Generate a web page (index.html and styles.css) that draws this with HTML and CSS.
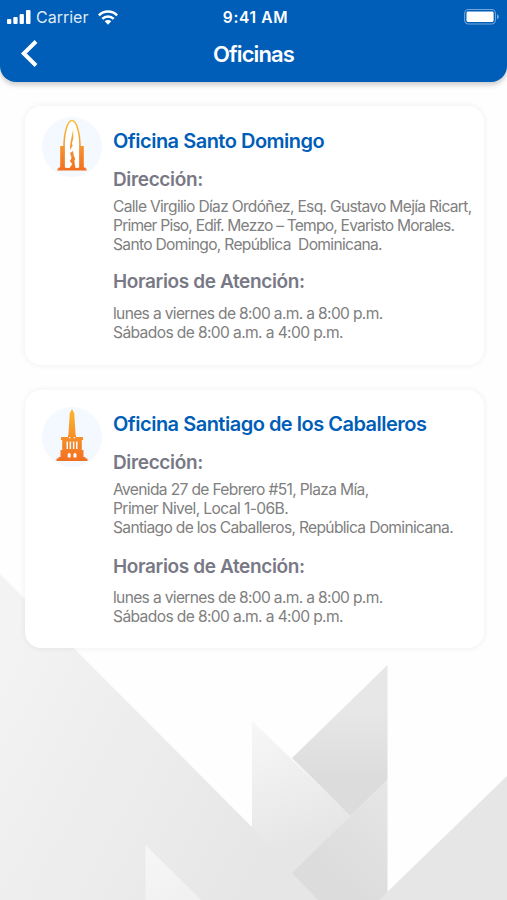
FILE: index.html
```html
<!DOCTYPE html>
<html lang="es">
<head>
<meta charset="utf-8">
<title>Oficinas</title>
<link rel="stylesheet" href="styles.css">
</head>
<body>
<svg class="backdrop" viewBox="0 0 507 340" aria-hidden="true">
  <defs>
    <linearGradient id="big" gradientUnits="userSpaceOnUse" x1="0" y1="100" x2="300" y2="260"><stop offset="0" stop-color="#f3f3f3"/><stop offset="1" stop-color="#e6e6e6"/></linearGradient>
    <linearGradient id="mid" gradientUnits="userSpaceOnUse" x1="256" y1="170" x2="300" y2="285"><stop offset="0" stop-color="#f6f6f6"/><stop offset="1" stop-color="#e6e6e6"/></linearGradient>
    <linearGradient id="dark" x1="0" y1="0" x2="0" y2="1"><stop offset="0.3" stop-color="#e7e7e7"/><stop offset="0.75" stop-color="#dcdcdc"/></linearGradient>
    <linearGradient id="low" x1="1" y1="0" x2="0.3" y2="1"><stop offset="0" stop-color="#e6e6e6"/><stop offset="0.8" stop-color="#dcdcdc"/></linearGradient>
    <linearGradient id="small" x1="0" y1="0.2" x2="0.5" y2="1"><stop offset="0" stop-color="#f6f6f6"/><stop offset="1" stop-color="#f1f1f1"/></linearGradient>
  </defs>
  <path fill="url(#big)" d="M0 14 252 267 350 256 387 331V340H0z"/>
  <path fill="url(#mid)" d="M252 161 351 256 292 314 252 267z"/>
  <path fill="url(#dark)" d="M387.500 105V220L350.500 256 292 198z"/>
  <path fill="url(#low)" d="M387.500 220V340H318L292 313z"/>
  <path fill="url(#small)" d="M145.500 285 201 340H145.500z"/>
  <path fill="#e6e6e6" d="M507 216V340H379z"/>
</svg>
<header class="topbar">
  <div class="status">
    <div class="status-left">
      <svg class="signal" viewBox="0 0 24 14"><g fill="#fff"><rect x="0" y="9" width="4.300" height="5" rx="1"/><rect x="6.300" y="7" width="4.300" height="7" rx="1"/><rect x="12.600" y="4" width="4.300" height="10" rx="1"/><rect x="19" y="0" width="4.500" height="14" rx="1"/></g></svg>
      <span class="carrier">Carrier</span>
      <svg class="wifi" viewBox="0 0 20 15"><g fill="none" stroke="#fff" stroke-width="2.500"><path d="M.9 5.300a13 13 0 0 1 18.200 0"/><path d="M4.300 8.900a8.100 8.100 0 0 1 11.400 0"/></g><path fill="#fff" d="M6.700 11.300a4.700 4.700 0 0 1 6.600 0L10 14.700z"/></svg>
    </div>
    <span class="clock">9:41 AM</span>
    <svg class="battery" viewBox="0 0 36 16"><rect x=".6" y=".6" width="31.800" height="14.800" rx="4" fill="none" stroke="#fff" stroke-opacity=".45" stroke-width="1.100"/><rect x="2.500" y="2.600" width="28" height="10.800" rx="1.500" fill="#fff"/><path fill="#fff" fill-opacity=".45" d="M34 5.300q2 .8 2 2.700t-2 2.700z"/></svg>
  </div>
  <div class="nav">
    <svg class="back" viewBox="0 0 18 28"><path d="M16 1.500 3.800 13.500 16 25.500" fill="none" stroke="#fff" stroke-width="4"/></svg>
    <h1>Oficinas</h1>
  </div>
</header>
<main>
  <section class="card">
    <div class="badge badge-first">
      <svg viewBox="0 0 60 60"><defs><linearGradient id="o1" gradientUnits="userSpaceOnUse" x1="0" y1="2" x2="0" y2="53"><stop offset="0" stop-color="#fbc23c"/><stop offset="1" stop-color="#f26f21"/></linearGradient></defs>
        <path fill="#fff" d="M22.500 51V30C22.500 16 26 4 30 4s7.500 12 7.500 26v21z"/>
        <path fill="none" stroke="url(#o1)" stroke-width="1.500" d="M22 51V30C22 16 25.500 3.500 30 3.500S38 16 38 30v21"/>
        <path fill="url(#o1)" d="M18.200 29h4.300v21.500h15V29h4.300v21.500h1.500L45 53.500H15l1.700-3h1.500z"/>
        <path fill="#fff" d="M23.500 48h13v2.800h-13z"/>
        <path fill="url(#o1)" d="M31.200 12v10l-1.200 4 .6 3-2.800 4 .8-8z M28 36l3-2 .8 5 1.400 2.500-.8 2.500 1 7h-5.800l2.600-4-2.400-3 1.800-3z"/></svg>
    </div>
    <div class="info">
      <h2 class="t-domingo">Oficina Santo Domingo</h2>
      <h3 class="t-dir">Dirección:</h3>
      <p class="address"><span class="a1">Calle Virgilio Díaz Ordóñez, Esq. Gustavo Mejía Ricart,</span><span class="a2">Primer Piso, Edif. Mezzo – Tempo, Evaristo Morales.</span><span class="a3">Santo Domingo, República&nbsp; Dominicana.</span></p>
      <h3 class="t-hor">Horarios de Atención:</h3>
      <p class="hours"><span class="weekdays">lunes a viernes de 8:00 a.m. a 8:00 p.m.</span><span class="saturday">Sábados de 8:00 a.m. a 4:00 p.m.</span></p>
    </div>
  </section>
  <section class="card card-second">
    <div class="badge badge-second">
      <svg viewBox="0 0 60 60"><defs><linearGradient id="o2" gradientUnits="userSpaceOnUse" x1="0" y1="2" x2="0" y2="54"><stop offset="0" stop-color="#fbb62f"/><stop offset="1" stop-color="#f26f21"/></linearGradient></defs>
        <path fill="url(#o2)" d="M30 2 27.800 6l-1.400 22h-.4v2H19v3h1.200v10H18.500v7h-2v1.500H14.500V54h31v-2.500H43.500V50h-2v-7h-1.700V33H41v-3h-7v-2h-.4L32.200 6z"/>
        <g fill="#f4f8ff"><path d="M24.500 34.500h1.500V42h-1.500zM27.600 34.500h1.500V42h-1.500zM30.900 34.500h1.500V42h-1.500zM34 34.500h1.500V42H34zM25.700 50.500V47q1.500-2 3 0v3.500zM31.500 50.500V47q1.500-2 3 0v3.500zM27 30h1.300v1.200H27zM31.800 30h1.300v1.200h-1.300z"/></g></svg>
    </div>
    <div class="info">
      <h2 class="t-santiago">Oficina Santiago de los Caballeros</h2>
      <h3 class="t-dir">Dirección:</h3>
      <p class="address"><span class="b1">Avenida 27 de Febrero #51, Plaza Mía,</span><span class="b2">Primer Nivel, Local 1-06B.</span><span class="b3">Santiago de los Caballeros, República Dominicana.</span></p>
      <h3 class="t-hor">Horarios de Atención:</h3>
      <p class="hours"><span class="weekdays">lunes a viernes de 8:00 a.m. a 8:00 p.m.</span><span class="saturday">Sábados de 8:00 a.m. a 4:00 p.m.</span></p>
    </div>
  </section>
</main>
</body>
</html>
```
FILE: styles.css
```css
* { box-sizing: border-box; margin: 0; padding: 0; }
body { height: 900px; overflow: hidden; background: #fefefe; font-family: Inter, "Liberation Sans", sans-serif; }
svg { display: block; flex: none; }
.backdrop { position: absolute; left: 0; top: 560px; width: 507px; height: 340px; z-index: -1; }
.topbar { height: 82px; background: #005eb8; color: #fff; border-radius: 0 0 16px 16px; box-shadow: 0 3px 5px rgba(0,0,0,.2); }
.status { height: 34px; display: grid; grid-template-columns: 1fr auto 1fr; align-items: center; padding: 0 8px 0 7px; }
.status-left { display: flex; align-items: center; }
.signal { width: 24px; height: 14px; }
.carrier { margin-left: 5px; font-size: 16px; letter-spacing: 0; opacity: .88; }
.wifi { width: 20px; height: 15px; margin-left: 10px; }
.clock { font-size: 15.500px; font-weight: 600; letter-spacing: .65px; margin-left: 5px; }
.battery { width: 35px; height: 15.500px; justify-self: end; }
.nav { height: 40px; display: grid; grid-template-columns: 1fr auto 1fr; align-items: center; padding: 0 20px; }
.back { width: 18px; height: 28px; }
h1 { font-size: 22px; line-height: 26px; font-weight: 600; letter-spacing: -.9px; }
main { padding: 24px 23px 0 25px; display: flex; flex-direction: column; gap: 25px; }
.card { height: 259px; background: #fff; border-radius: 16px; box-shadow: 0 0 6px rgba(0,0,0,.07); padding: 22px 0 0 17px; display: flex; align-items: flex-start; gap: 11px; }
.card-second { height: 258px; padding-top: 21px; }
.badge { flex: none; width: 60px; height: 60px; border-radius: 50%; background: #f4f8ff; }
.badge-first { margin-top: -11px; }
.badge-second { margin-top: -4px; }
.info { white-space: nowrap; }
h2 { font-size: 20px; line-height: 26px; font-weight: 600; color: #005eb8; letter-spacing: -.5px; }
h3 { font-size: 19px; line-height: 24px; font-weight: 600; color: #787985; }
.t-dir { margin-top: 14px; letter-spacing: -.35px; }
.t-hor { margin-top: 16px; letter-spacing: -.37px; }
.card-second .t-hor { margin-top: 18px; }
p { font-size: 15.600px; line-height: 19px; color: #808080; }
p span { display: block; width: max-content; }
.address { margin-top: 5px; }
.hours { margin-top: 10px; }
.card-second .hours { margin-top: 9px; }
.a1 { letter-spacing: -.7px; }
.a2 { letter-spacing: -.8px; }
.a3 { letter-spacing: -.69px; }
.b1 { letter-spacing: -.66px; }
.b2 { letter-spacing: -.59px; }
.b3 { letter-spacing: -.68px; }
.weekdays { letter-spacing: -.67px; }
.saturday { letter-spacing: -.62px; }
```
